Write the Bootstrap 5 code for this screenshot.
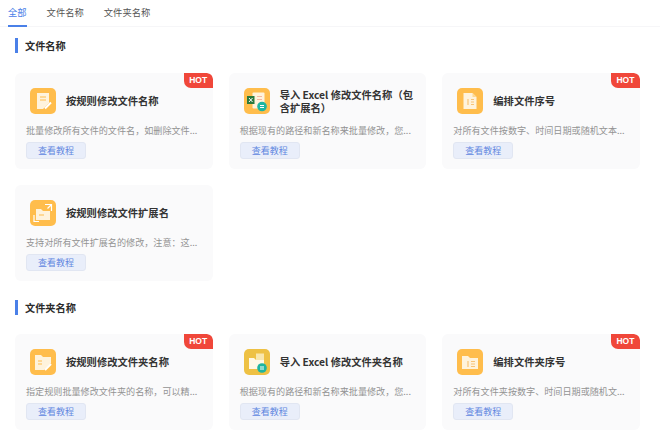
<!DOCTYPE html>
<html lang="zh-CN">
<head>
  <meta charset="UTF-8" />
  <title>批量修改文件名称</title>
  <link href="https://cdn.jsdelivr.net/npm/bootstrap@5.3.0/dist/css/bootstrap.min.css" rel="stylesheet"/>
  <style>
    body {
      font-family: "Noto Sans CJK SC", "Liberation Sans", sans-serif;
      background: #fff;
      overflow: hidden;
    }
    .tab-bar {
      height: 27px;
      padding-left: 8px;
      gap: 20px;
      border-bottom: 1px solid #f6f6f8;
    }
    .tab-item {
      font-size: 9.3px;
      line-height: 25px;
      height: 27px;
      color: #555;
    }
    .tab-item.is-on {
      color: #4a80e8;
      border-bottom: 2px solid #4a80e8;
    }
    .page-body { padding: 0 20px 0 15px; }
    .group-head {
      height: 15px;
      padding-left: 7px;
      border-left: 3px solid #4a80e8;
      font-size: 10.2px;
      line-height: 15px;
      font-weight: 700;
      color: #2b2b2b;
    }
    .head-one { margin-top: 11px; margin-bottom: 20px; }
    .head-two { margin-top: 19px; margin-bottom: 19px; }
    .tool-card {
      height: 96px;
      padding: 15px 11px 0;
      background: #fafafb;
      border-radius: 6px;
      overflow: hidden;
    }
    .tool-icon {
      width: 26px;
      height: 26px;
      flex: none;
      display: block;
    }
    .tool-top { height: 26px; gap: 10px; margin-left: 4px; }
    .tool-title {
      font-size: 10.3px;
      line-height: 13px;
      font-weight: 700;
      color: #333;
      margin-top: -1px;
    }
    .tool-desc {
      margin-top: 9px;
      font-size: 9.1px;
      line-height: 14px;
      color: #939393;
      white-space: nowrap;
    }
    .guide-btn {
      width: 60px;
      height: 17px;
      margin-top: 5px;
      padding: 0;
      font-size: 9px;
      line-height: 15px;
      color: #5f86e0;
      background: #e9eefa;
      border: 1px solid #e1e6f2;
      border-radius: 3px;
    }
    .hot-tag {
      position: absolute;
      top: 0;
      right: 0;
      width: 29px;
      height: 15px;
      font-size: 8.5px;
      line-height: 15px;
      font-weight: 700;
      font-family: "Liberation Sans", sans-serif;
      text-align: center;
      color: #fff;
      background: #f0473a;
      border-radius: 0 6px 0 7px;
    }
  </style>
</head>
<body>
  <div class="tab-bar d-flex">
    <div class="tab-item is-on">全部</div>
    <div class="tab-item">文件名称</div>
    <div class="tab-item">文件夹名称</div>
  </div>

  <div class="page-body">
    <div class="group-head head-one">文件名称</div>
    <div class="row g-3">
      <div class="col-4">
        <div class="tool-card position-relative">
          <span class="hot-tag">HOT</span>
          <div class="tool-top d-flex align-items-center">
            <svg class="tool-icon" viewBox="0 0 26 26"><rect width="26" height="26" rx="5" fill="#ffbd4c"/><path d="M7 5h12v10l-6 6H7z" fill="#fff3dc"/><path d="M10 9h6M10 12h6" stroke="#ffbd4c" stroke-width="1.200"/><path d="M15 20.500l6-6" stroke="#fff" stroke-width="2"/></svg>
            <div class="tool-title">按规则修改文件名称</div>
          </div>
          <div class="tool-desc">批量修改所有文件的文件名，如删除文件...</div>
          <button class="btn guide-btn d-block">查看教程</button>
        </div>
      </div>
      <div class="col-4">
        <div class="tool-card position-relative">
          <div class="tool-top d-flex align-items-center">
            <svg class="tool-icon" viewBox="0 0 26 26"><rect width="26" height="26" rx="5" fill="#ffbd4c"/><rect x="8.500" y="4.500" width="12" height="16" rx="1" fill="#fff3dc"/><path d="M13 8.500h5M13 11.500h5" stroke="#f5b7a0" stroke-width="1.200"/><rect x="3" y="8" width="7.500" height="8" fill="#2b7a3d"/><path d="M5 10l3.500 4M8.500 10l-3.500 4" stroke="#fff" stroke-width="1"/><circle cx="18" cy="18.500" r="4.800" fill="#1fb5a0"/><path d="M16 17.500h4M20 19.500h-4" stroke="#fff" stroke-width="1"/></svg>
            <div class="tool-title">导入 Excel 修改文件名称（包含扩展名）</div>
          </div>
          <div class="tool-desc">根据现有的路径和新名称来批量修改，您...</div>
          <button class="btn guide-btn d-block">查看教程</button>
        </div>
      </div>
      <div class="col-4">
        <div class="tool-card position-relative">
          <span class="hot-tag">HOT</span>
          <div class="tool-top d-flex align-items-center">
            <svg class="tool-icon" viewBox="0 0 26 26"><rect width="26" height="26" rx="5" fill="#ffbd4c"/><path d="M6.500 5h9l4 4v12h-13z" fill="#fff3dc"/><path d="M15.500 5l4 4h-4z" fill="#ffd98f"/><path d="M11 11v6M14 11.500h3M14 14h3M14 16.500h3" stroke="#f8c477" stroke-width="1.200"/></svg>
            <div class="tool-title">编排文件序号</div>
          </div>
          <div class="tool-desc">对所有文件按数字、时间日期或随机文本...</div>
          <button class="btn guide-btn d-block">查看教程</button>
        </div>
      </div>
      <div class="col-4">
        <div class="tool-card position-relative">
          <div class="tool-top d-flex align-items-center">
            <svg class="tool-icon" viewBox="0 0 26 26"><rect width="26" height="26" rx="5" fill="#ffbd4c"/><path d="M6 9h5l2 2h7v9H6z" fill="#fff3dc"/><path d="M9 15h5" stroke="#ffbd4c" stroke-width="1.200"/><path d="M15 4.500h6.500V11M21.500 4.500l-4 4M4 15v6.500h5" stroke="#fff" stroke-width="1.200" fill="none"/></svg>
            <div class="tool-title">按规则修改文件扩展名</div>
          </div>
          <div class="tool-desc">支持对所有文件扩展名的修改，注意：这...</div>
          <button class="btn guide-btn d-block">查看教程</button>
        </div>
      </div>
    </div>

    <div class="group-head head-two">文件夹名称</div>
    <div class="row g-3">
      <div class="col-4">
        <div class="tool-card position-relative">
          <span class="hot-tag">HOT</span>
          <div class="tool-top d-flex align-items-center">
            <svg class="tool-icon" viewBox="0 0 26 26"><rect width="26" height="26" rx="5" fill="#ffbd4c"/><path d="M5 6h6l2 2h8v6l-7 7H5z" fill="#fff3dc"/><path d="M8 12h4M8 15h4" stroke="#ffbd4c" stroke-width="1.200"/><path d="M15 21l6-6" stroke="#fff" stroke-width="2"/></svg>
            <div class="tool-title">按规则修改文件夹名称</div>
          </div>
          <div class="tool-desc">指定规则批量修改文件夹的名称，可以精...</div>
          <button class="btn guide-btn d-block">查看教程</button>
        </div>
      </div>
      <div class="col-4">
        <div class="tool-card position-relative">
          <div class="tool-top d-flex align-items-center">
            <svg class="tool-icon" viewBox="0 0 26 26"><rect width="26" height="26" rx="5" fill="#eec144"/><path d="M12 4.500h8v9h-8z" fill="#f9e7ae"/><path d="M5 9h5l2 2h8v9H5z" fill="#fff8e6"/><circle cx="18" cy="19" r="4.800" fill="#1fb5a0"/><path d="M16 18h4M20 20h-4" stroke="#fff" stroke-width="1"/></svg>
            <div class="tool-title">导入 Excel 修改文件夹名称</div>
          </div>
          <div class="tool-desc">根据现有的路径和新名称来批量修改，您...</div>
          <button class="btn guide-btn d-block">查看教程</button>
        </div>
      </div>
      <div class="col-4">
        <div class="tool-card position-relative">
          <span class="hot-tag">HOT</span>
          <div class="tool-top d-flex align-items-center">
            <svg class="tool-icon" viewBox="0 0 26 26"><rect width="26" height="26" rx="5" fill="#ffbd4c"/><path d="M5 7h6l2 2h8v11H5z" fill="#fff3dc"/><path d="M11 12v6M14 12.500h4M14 15h4M14 17.500h4" stroke="#f8c477" stroke-width="1.200"/></svg>
            <div class="tool-title">编排文件夹序号</div>
          </div>
          <div class="tool-desc">对所有文件夹按数字、时间日期或随机文...</div>
          <button class="btn guide-btn d-block">查看教程</button>
        </div>
      </div>
    </div>
  </div>

  <script src="https://cdn.jsdelivr.net/npm/bootstrap@5.3.0/dist/js/bootstrap.bundle.min.js"></script>
</body>
</html>
